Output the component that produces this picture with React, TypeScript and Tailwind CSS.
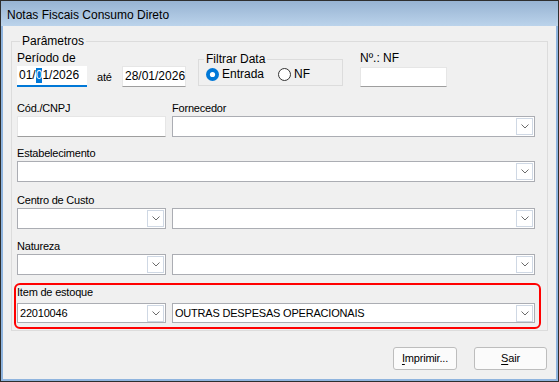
import React from 'react';

const ui = "font-['Liberation_Sans',Arial,sans-serif] text-[12px] leading-[15px] text-black";
const px = "font-['Liberation_Sans',Arial,sans-serif] text-[11px] leading-[15px] tracking-[-0.2px] text-black";

function Chevron() {
  return (
    <svg width="8" height="5" viewBox="0 0 8 5">
      <path d="M0.5 0.5L4 4L7.5 0.5" stroke="#6b6b6b" strokeWidth="1" fill="none" />
    </svg>
  );
}

function Combo({ value, className, h = 'h-[21px]' }: { value?: string; className?: string; h?: string }) {
  return (
    <div className={`flex items-center border border-[#abadb3] bg-white ${h} ${className ?? ''}`}>
      <span className={`flex-1 truncate pl-[2px] ${px}`}>{value}</span>
      <div className="mr-[1px] flex h-[17px] w-[17px] items-center justify-center border border-[#cfd8e4] bg-white">
        <Chevron />
      </div>
    </div>
  );
}

function Field({ className }: { className?: string }) {
  return <div className={`border border-[#e6e6e6] border-b-[#9e9e9e] bg-white ${className ?? ''}`} />;
}

function Radio({ checked }: { checked?: boolean }) {
  return (
    <svg width="13" height="13" viewBox="0 0 13 13">
      {checked ? (
        <>
          <circle cx="6.5" cy="6.5" r="6.5" fill="#0078d7" />
          <circle cx="6.5" cy="6.5" r="2.6" fill="#ffffff" />
        </>
      ) : (
        <circle cx="6.5" cy="6.5" r="6" fill="#ffffff" stroke="#333333" strokeWidth="1" />
      )}
    </svg>
  );
}

function Label({ children }: { children: React.ReactNode }) {
  return <div className={`h-[15px] ${px}`}>{children}</div>;
}

export default function App() {
  return (
    <div className="flex h-[382px] w-[559px] flex-col bg-[#2e2e2e] p-[1px]">
      {/* title bar */}
      <div className={`h-[25px] bg-gradient-to-b from-[#97b3d2] to-[#bbd3eb] pl-[6px] pt-[7px] ${ui}`}>
        Notas Fiscais Consumo Direto
      </div>

      <div className="flex flex-1 flex-col border-x-2 border-b-2 border-[#8fb4de] bg-[#f0f0f0]">
        <fieldset className="ml-[8px] mt-[7px] w-[537px] border border-[#dcdcdc] pb-[1px] pl-[5px] pr-[12px] pt-[2px]">
          <legend className={`ml-[3px] px-[2px] leading-[16px] ${ui}`}>Parâmetros</legend>

          {/* row 1 */}
          <div className="flex h-[36px] items-start">
            <div className="flex w-[70px] flex-col">
              <div className={`h-[15px] ${ui}`}>Período de</div>
              <div className={`flex h-[21px] items-center border-b-2 border-[#0078d7] bg-white pl-[2px] ${ui}`}>
                <span>01/</span>
                <span className="bg-[#0078d7] text-white">0</span>
                <span>1/2026</span>
              </div>
            </div>
            <div className={`ml-[10px] mt-[19px] w-[25px] ${px}`}>até</div>
            <div className={`mt-[15px] flex h-[21px] w-[64px] items-center border border-[#e6e6e6] border-b-[#9e9e9e] bg-white pl-[2px] ${ui}`}>
              28/01/2026
            </div>
            <fieldset className="ml-[12px] w-[145px] border border-[#dcdcdc] pb-[4px] pl-[5px]">
              <legend className={`px-[2px] leading-[16px] ${ui}`}>Filtrar Data</legend>
              <div className={`ml-[2px] flex h-[14px] items-center ${ui}`}>
                <Radio checked />
                <span className="ml-[3px]">Entrada</span>
                <span className="ml-[14px] flex items-center">
                  <Radio />
                </span>
                <span className="ml-[3px]">NF</span>
              </div>
            </fieldset>
            <div className="ml-[17px] flex w-[87px] flex-col">
              <div className={`h-[16px] ${ui}`}>Nº.: NF</div>
              <Field className="h-[20px]" />
            </div>
          </div>

          {/* row 2 */}
          <div className="mt-[14px] flex gap-[6px]">
            <div className="flex w-[149px] flex-col">
              <Label>Cód./CNPJ</Label>
              <Field className="h-[21px]" />
            </div>
            <div className="flex flex-1 flex-col">
              <Label>Fornecedor</Label>
              <Combo />
            </div>
          </div>

          {/* row 3 */}
          <div className="mt-[9px] flex flex-col">
            <Label>Estabelecimento</Label>
            <Combo />
          </div>

          {/* row 4 */}
          <div className="mt-[11px] flex flex-col">
            <Label>Centro de Custo</Label>
            <div className="flex gap-[6px]">
              <Combo className="w-[149px]" />
              <Combo className="flex-1" />
            </div>
          </div>

          {/* row 5 */}
          <div className="mt-[10px] flex flex-col">
            <Label>Natureza</Label>
            <div className="flex gap-[6px]">
              <Combo className="w-[149px]" />
              <Combo className="flex-1" />
            </div>
          </div>

          {/* highlighted row */}
          <div className="-ml-[3px] -mr-[6px] mt-[8px] flex flex-col rounded-[6px] border-2 border-[#ff0000] pb-[4px] pl-[1px] pr-[4px]">
            <div className={`h-[18px] ${px}`}>Item de estoque</div>
            <div className="flex gap-[6px]">
              <Combo className="w-[149px]" h="h-[20px]" value="22010046" />
              <Combo className="flex-1" h="h-[20px]" value="OUTRAS DESPESAS OPERACIONAIS" />
            </div>
          </div>
        </fieldset>

        {/* buttons */}
        <div className="mr-[9px] mt-[16px] flex justify-end gap-[17px]">
          <button className={`h-[23px] w-[64px] rounded-[3px] border border-[#bdbdbd] bg-[#fbfbfb] ${px}`}>
            <span className="underline underline-offset-2">I</span>mprimir...
          </button>
          <button className={`h-[23px] w-[73px] rounded-[3px] border border-[#bdbdbd] bg-[#fbfbfb] ${px}`}>
            <span className="underline underline-offset-2">S</span>air
          </button>
        </div>
      </div>
    </div>
  );
}
